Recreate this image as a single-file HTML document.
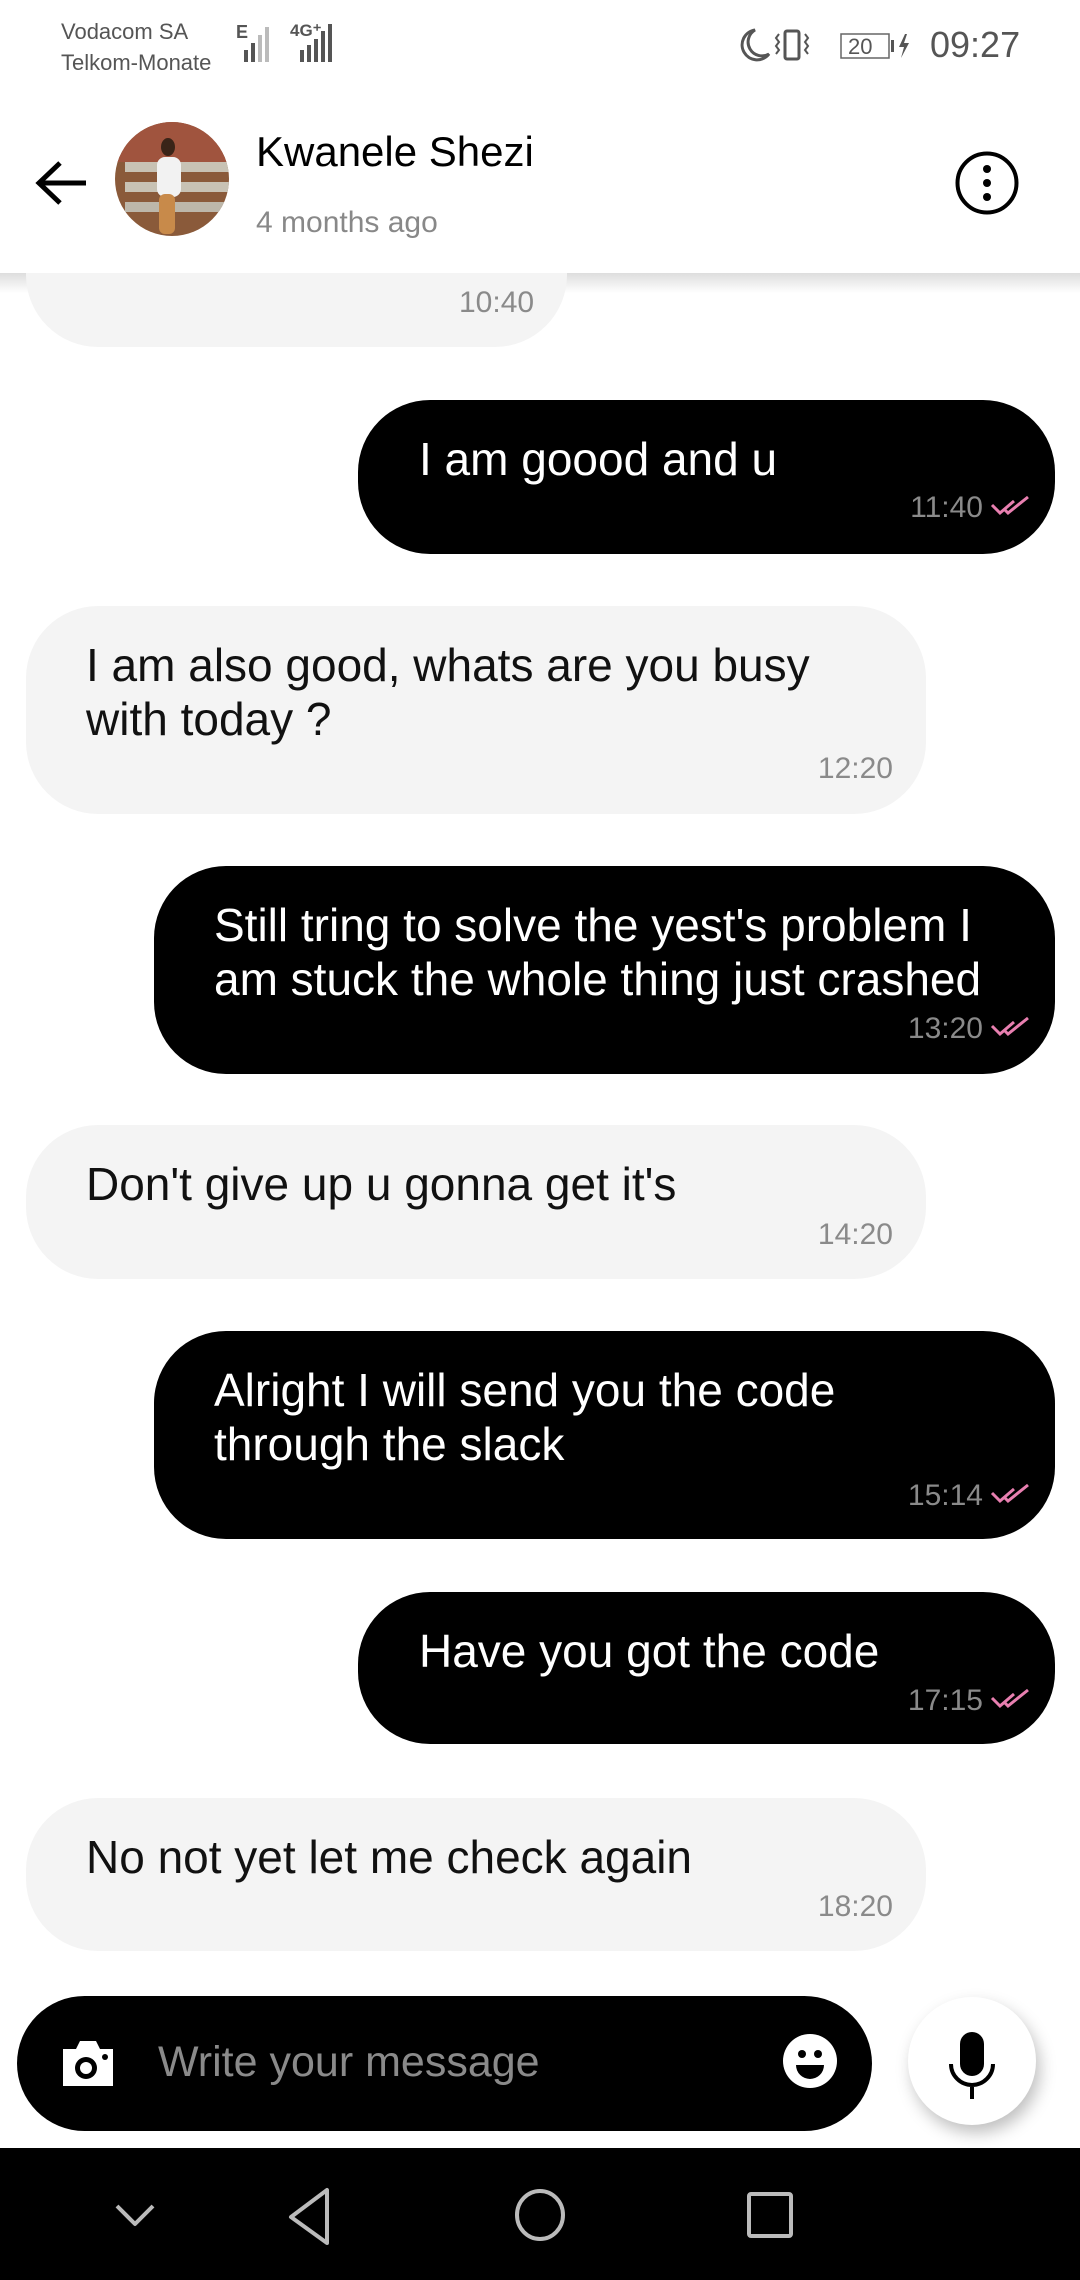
<!DOCTYPE html>
<html><head><meta charset="utf-8"><style>
*{margin:0;padding:0;box-sizing:border-box}
body{width:1080px;height:2280px;background:#fff;position:relative;overflow:hidden;font-family:"Liberation Sans",Arial,sans-serif}
.a{position:absolute}
.b{position:absolute;border-radius:72px}
.r{background:#f4f4f4;left:26px;width:900px;color:#111}
.s{background:#000;right:25px;color:#fff}
.t{position:absolute;font-size:46px;line-height:54px;white-space:nowrap}
.tm{position:absolute;font-size:30px;color:#8a8a8a;white-space:nowrap}
.tk{position:absolute;width:40px;height:22px}
</style></head><body>
<!-- status bar -->
<div class="a" style="left:61px;top:16px;font-size:22px;color:#555;line-height:31px">Vodacom SA<br>Telkom-Monate</div>
<svg class="a" style="left:236px;top:20px" width="120" height="44" viewBox="0 0 120 44">
<text x="0" y="18" font-size="18" font-weight="bold" fill="#555" font-family="Liberation Sans">E</text>
<rect x="8" y="30" width="4" height="12" fill="#555"/><rect x="15" y="23" width="4" height="19" fill="#555"/><rect x="22" y="15" width="4" height="27" fill="#bbb"/><rect x="29" y="7" width="4" height="35" fill="#bbb"/>
<text x="54" y="16" font-size="17" font-weight="bold" fill="#555" font-family="Liberation Sans">4G⁺</text>
<rect x="64" y="30" width="4" height="12" fill="#555"/><rect x="71" y="25" width="4" height="17" fill="#555"/><rect x="78" y="19" width="4" height="23" fill="#555"/><rect x="85" y="11" width="4" height="31" fill="#555"/><rect x="92" y="4" width="4" height="38" fill="#555"/>
</svg>
<svg class="a" style="left:735px;top:26px" width="200" height="40" viewBox="0 0 200 40">
<path d="M20 4 A15 15 0 1 0 34 28 A13 13 0 0 1 20 4Z" fill="none" stroke="#555" stroke-width="3"/>
<rect x="50" y="5" width="14" height="28" rx="2" fill="none" stroke="#555" stroke-width="3"/>
<path d="M44 8 l-3 4 l3 4 l-3 4 l3 4 l-3 4M70 8 l3 4 l-3 4 l3 4 l-3 4 l3 4" fill="none" stroke="#555" stroke-width="2"/>
<rect x="106" y="8" width="48" height="24" fill="none" stroke="#666" stroke-width="1.5"/>
<text x="113" y="28" font-size="22" fill="#555" font-family="Liberation Sans">20</text>
<rect x="156" y="14" width="3" height="12" fill="#555"/>
<path d="M170 8 l-6 13 h5 l-3 11 l8-15 h-5 l3-9z" fill="#555"/>
</svg>
<div class="a" style="left:930px;top:24px;font-size:36px;color:#555">09:27</div>
<!-- header -->
<div class="a" style="left:0;top:273px;width:1080px;height:20px;background:linear-gradient(#ddd,rgba(255,255,255,0))"></div>
<div class="b r" style="top:200px;width:541px;height:147px;border-radius:0 0 72px 72px"></div>
<div class="tm" style="left:459px;top:286px">10:40</div>
<div class="a" style="left:0;top:95px;width:1080px;height:178px;background:#fff"></div>
<svg class="a" style="left:34px;top:158px" width="56" height="50" viewBox="0 0 56 50"><path d="M52 25H6M26 5L5 25l21 20" fill="none" stroke="#000" stroke-width="5"/></svg>
<div class="a" style="left:115px;top:122px;width:114px;height:114px;border-radius:50%;overflow:hidden;background:#8a5a3a">
<div class="a" style="left:0;top:0;width:114px;height:40px;background:#a0543e"></div>
<div class="a" style="left:10px;top:40px;width:104px;height:10px;background:#c8c2b4"></div>
<div class="a" style="left:10px;top:60px;width:104px;height:10px;background:#c8c2b4"></div>
<div class="a" style="left:10px;top:80px;width:104px;height:10px;background:#bdb7aa"></div>
<div class="a" style="left:42px;top:35px;width:24px;height:40px;background:#f2f2f2;border-radius:8px"></div>
<div class="a" style="left:46px;top:16px;width:14px;height:18px;background:#3a2418;border-radius:50%"></div>
<div class="a" style="left:44px;top:72px;width:16px;height:40px;background:#c88a4a;border-radius:6px"></div>
</div>
<div class="a" style="left:256px;top:128px;font-size:42px;color:#000">Kwanele Shezi</div>
<div class="a" style="left:256px;top:206px;font-size:30px;color:#888">4 months ago</div>
<svg class="a" style="left:954px;top:150px" width="66" height="66" viewBox="0 0 66 66"><circle cx="33" cy="33" r="29.5" fill="none" stroke="#000" stroke-width="4"/><circle cx="33" cy="19" r="4" fill="#000"/><circle cx="33" cy="33" r="4" fill="#000"/><circle cx="33" cy="47" r="4" fill="#000"/></svg>

<!-- messages -->
<div class="b s" style="top:400px;left:358px;height:154px"><div class="t" style="left:61px;top:32px">I am goood and u</div><div class="tm" style="right:72px;top:91px">11:40</div><svg class="tk" style="right:25px;top:95px" viewBox="0 0 40 22"><path d="M2 10l8 8 14-12M14 14l4 4 20-16" fill="none" stroke="#e87fb0" stroke-width="3"/></svg></div>

<div class="b r" style="top:606px;height:208px"><div class="t" style="left:60px;top:32px">I am also good, whats are you busy<br>with today ?</div><div class="tm" style="right:33px;top:146px">12:20</div></div>

<div class="b s" style="top:866px;left:154px;height:208px"><div class="t" style="left:60px;top:32px">Still tring to solve the yest's problem I<br>am stuck the whole thing just crashed</div><div class="tm" style="right:72px;top:146px">13:20</div><svg class="tk" style="right:25px;top:150px" viewBox="0 0 40 22"><path d="M2 10l8 8 14-12M14 14l4 4 20-16" fill="none" stroke="#e87fb0" stroke-width="3"/></svg></div>

<div class="b r" style="top:1125px;height:154px"><div class="t" style="left:60px;top:32px">Don't give up u gonna get it's</div><div class="tm" style="right:33px;top:93px">14:20</div></div>

<div class="b s" style="top:1331px;left:154px;height:208px"><div class="t" style="left:60px;top:32px">Alright I will send you the code<br>through the slack</div><div class="tm" style="right:72px;top:148px">15:14</div><svg class="tk" style="right:25px;top:152px" viewBox="0 0 40 22"><path d="M2 10l8 8 14-12M14 14l4 4 20-16" fill="none" stroke="#e87fb0" stroke-width="3"/></svg></div>

<div class="b s" style="top:1592px;left:358px;height:152px"><div class="t" style="left:61px;top:32px">Have you got the code</div><div class="tm" style="right:72px;top:92px">17:15</div><svg class="tk" style="right:25px;top:96px" viewBox="0 0 40 22"><path d="M2 10l8 8 14-12M14 14l4 4 20-16" fill="none" stroke="#e87fb0" stroke-width="3"/></svg></div>

<div class="b r" style="top:1798px;height:153px"><div class="t" style="left:60px;top:32px">No not yet let me check again</div><div class="tm" style="right:33px;top:92px">18:20</div></div>

<!-- input -->
<div class="a" style="left:17px;top:1996px;width:855px;height:135px;border-radius:68px;background:#000"></div>
<svg class="a" style="left:60px;top:2037px" width="56" height="52" viewBox="0 0 56 52"><path d="M3 12h13l4-8h16l4 8h13v37H3z" fill="#fff"/><circle cx="26" cy="31" r="11" fill="#000"/><circle cx="26" cy="31" r="6" fill="#fff"/><circle cx="45" cy="20" r="3" fill="#000"/></svg>
<div class="a" style="left:158px;top:2038px;font-size:43px;color:#8a8a8a">Write your message</div>
<svg class="a" style="left:783px;top:2034px" width="54" height="54" viewBox="0 0 54 54"><circle cx="27" cy="27" r="27" fill="#fff"/><circle cx="19" cy="20" r="4" fill="#000"/><circle cx="35" cy="20" r="4" fill="#000"/><path d="M13 31h28a14 14 0 0 1-28 0z" fill="#000"/></svg>
<div class="a" style="left:908px;top:1997px;width:128px;height:128px;border-radius:50%;background:#fff;box-shadow:4px 8px 16px rgba(0,0,0,0.25)"></div>
<svg class="a" style="left:944px;top:2030px" width="56" height="72" viewBox="0 0 56 72"><rect x="16" y="2" width="24" height="44" rx="12" fill="#000"/><path d="M7 34a21 21 0 0 0 42 0M28 55v14" fill="none" stroke="#000" stroke-width="4"/></svg>
<!-- nav -->
<div class="a" style="left:0;top:2148px;width:1080px;height:132px;background:#000"></div>
<svg class="a" style="left:0;top:2148px" width="1080" height="132" viewBox="0 0 1080 132"><g fill="none" stroke="#bbb" stroke-width="4" stroke-linejoin="round"><path d="M117 58l18 18 18-18"/><path d="M327 42v53l-36-26z"/><ellipse cx="540" cy="67" rx="23" ry="24"/><rect x="749" y="46" width="42" height="42" rx="2"/></g></svg>
</body></html>
